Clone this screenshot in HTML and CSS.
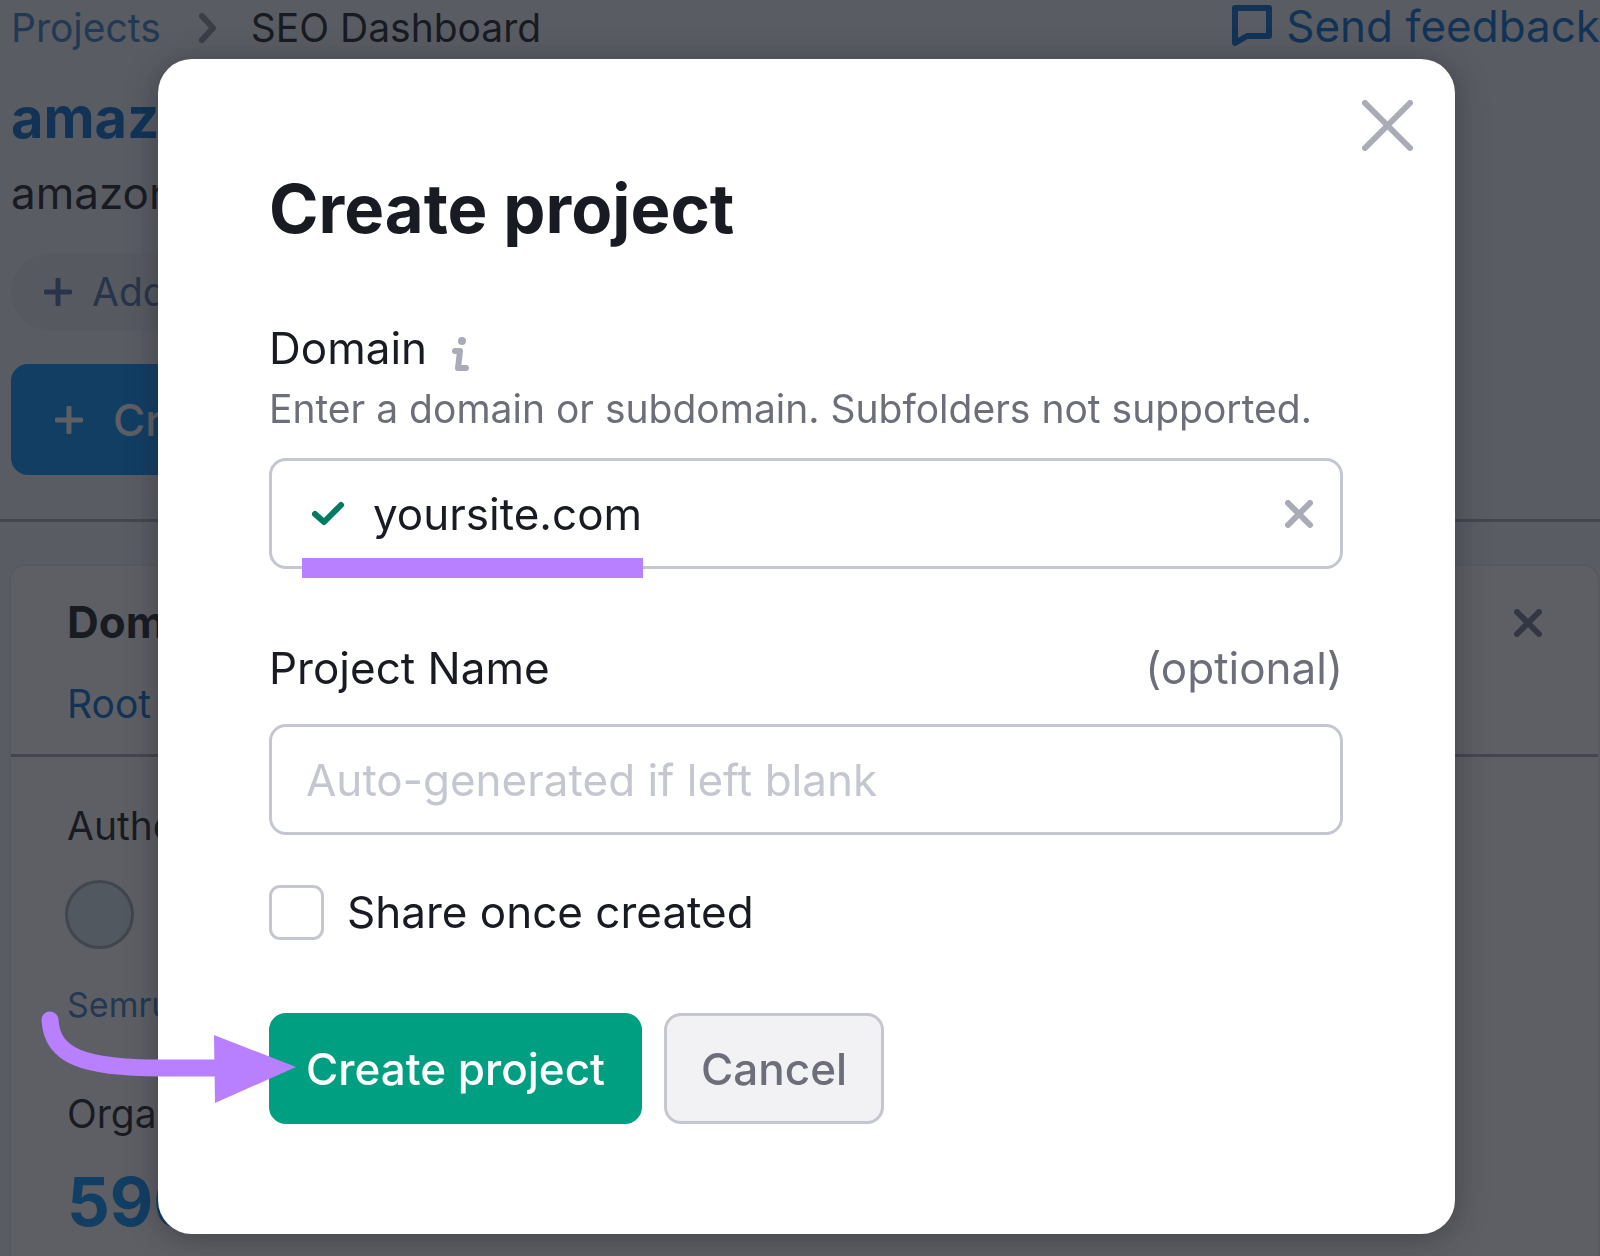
FILE: index.html
```html
<!DOCTYPE html>
<html lang="en">
<head>
  <meta charset="UTF-8">
  <meta name="viewport" content="width=device-width, initial-scale=1.0">
  <title>SEO Dashboard</title>
  <link rel="stylesheet" href="styles.css">
</head>
<body>
  <div class="page">
    <header class="topbar">
      <nav class="breadcrumb">
        <a href="#">Projects</a>
        <svg class="chevron" width="18" height="30" viewBox="0 0 18 30"><path d="M3 3l11 12L3 27"/></svg>
        <span>SEO Dashboard</span>
      </nav>
      <a class="feedback" href="#">
        <svg width="40" height="42" viewBox="0 0 40 42"><path d="M3 3h34v28H15L3 38z"/></svg>
        Send feedback
      </a>
    </header>

    <section class="summary">
      <a class="project" href="#">amazon</a>
      <p class="domain">amazon.com</p>
      <button class="tag">
        <svg width="28" height="28" viewBox="0 0 28 28"><path d="M14 2v24M2 14h24"/></svg>
        Add tags
      </button>
      <button class="new-project">
        <svg width="28" height="28" viewBox="0 0 28 28"><path d="M14 2v24M2 14h24"/></svg>
        Create
      </button>
    </section>

    <section class="card">
      <div class="card-head">
        <div>
          <h2>Domain</h2>
          <a href="#">Root</a>
        </div>
        <button class="card-close" aria-label="Remove">
          <svg width="28" height="28" viewBox="0 0 28 28"><path d="M3 3l22 22M25 3L3 25"/></svg>
        </button>
      </div>
      <div class="card-body">
        <p class="metric">Authority</p>
        <div class="score"></div>
        <a class="rank" href="#">Semrush</a>
        <p class="metric">Organic</p>
        <strong class="value">590M</strong>
      </div>
    </section>
  </div>

  <div class="overlay">
    <form class="modal" role="dialog" aria-labelledby="modal_title">
      <button type="button" class="close" aria-label="Close">
        <svg width="51" height="51" viewBox="0 0 51 51"><path d="M3 3l45 45M48 3L3 48"/></svg>
      </button>
      <h1 id="modal_title">Create project</h1>

      <div class="label-row">
        <label for="domain">Domain</label>
        <svg class="info" width="18" height="36" viewBox="0 0 18 36"><circle cx="10" cy="5" r="4"/><path d="M3 15h5L6 32h8"/></svg>
      </div>
      <p class="hint">Enter a domain or subdomain. Subfolders not supported.</p>
      <div class="field">
        <svg class="check" width="32" height="25" viewBox="0 0 32 25"><path d="M3 13l9 8L29 4"/></svg>
        <input type="text" id="domain" value="yoursite.com">
        <button type="button" class="clear" aria-label="Clear">
          <svg width="28" height="28" viewBox="0 0 28 28"><path d="M3 3l22 22M25 3L3 25"/></svg>
        </button>
        <span class="underline"></span>
      </div>

      <div class="label-row name-row">
        <label for="name">Project Name</label>
        <span class="optional">(optional)</span>
      </div>
      <div class="field">
        <input type="text" id="name" placeholder="Auto-generated if left blank">
      </div>

      <div class="share">
        <input type="checkbox" id="share">
        <label for="share">Share once created</label>
      </div>

      <div class="actions">
        <button type="submit" class="btn btn-primary">Create project</button>
        <button type="button" class="btn btn-cancel">Cancel</button>
      </div>

      <svg class="arrow" width="256" height="96" viewBox="0 0 256 96">
        <path class="tail" d="M9 11C11 47 42 59 120 59H176"/>
        <path class="head" d="M173 26L255 58L174 94z"/>
      </svg>
    </form>
  </div>
</body>
</html>
```

FILE: styles.css
```css
* {
  box-sizing: border-box;
}
body {
  margin: 0;
  font-family: Inter, "Liberation Sans", sans-serif;
  font-size: 44px;
  line-height: 56px;
  color: #191b23;
  background: #f0f4f9;
}
h1, h2, p {
  margin: 0;
}
a {
  color: #006dca;
  text-decoration: none;
}
button, input {
  font: inherit;
  color: inherit;
}
button {
  border: none;
  padding: 0;
  background: none;
  cursor: pointer;
}
svg {
  display: block;
  flex: none;
  fill: none;
  stroke: currentColor;
  stroke-width: 6;
  stroke-linecap: round;
  stroke-linejoin: round;
}

/* dashboard behind the dialog */
.page {
  height: 100vh;
  overflow: hidden;
}
.topbar {
  display: flex;
  justify-content: space-between;
  height: 56px;
  padding-left: 11px;
}
.breadcrumb {
  display: flex;
  align-items: center;
  font-size: 39px;
}
.breadcrumb a {
  color: #3a7fc4;
}
.chevron {
  margin: 0 34px 0 38px;
  color: #8a8e9b;
}
.feedback {
  display: flex;
  align-items: center;
  gap: 14px;
  height: 52px;
}
.summary {
  display: flex;
  flex-direction: column;
  align-items: flex-start;
  padding: 28px 11px 44px;
  border-bottom: 3px solid #a9abb6;
}
.project {
  font-size: 56px;
  font-weight: 700;
  line-height: 68px;
}
.domain {
  margin: 13px 0 32px;
}
.tag, .new-project {
  display: flex;
  align-items: center;
}
.tag {
  gap: 20px;
  height: 78px;
  padding: 0 33px;
  border-radius: 39px;
  background: #e8ebf0;
  color: #4a6fa5;
  font-size: 39px;
}
.tag svg, .new-project svg {
  stroke-width: 5;
}
.new-project {
  gap: 30px;
  height: 111px;
  margin-top: 33px;
  padding: 0 44px;
  border-radius: 17px;
  background: #008ff8;
  color: #fff;
  font-weight: 500;
}
.card {
  margin: 42px 0 0 9px;
  border: 2px solid #e8eaef;
  border-radius: 17px;
  background: #fff;
}
.card-head {
  display: flex;
  justify-content: space-between;
  align-items: flex-start;
  padding: 28px 56px 22px;
  border-bottom: 3px solid #a9abb6;
}
.card-head h2 {
  margin-bottom: 26px;
  font-size: 44px;
}
.card-head a {
  display: block;
  font-size: 39px;
}
.card-close {
  margin-top: 15px;
  color: #6c7a8c;
}
.card-body {
  padding: 41px 56px;
}
.metric {
  font-size: 39px;
}
.score {
  width: 69px;
  height: 69px;
  margin: 26px 0 36px -2px;
  border: 3px solid #9aa8b2;
  border-radius: 50%;
  background: #d3e6ea;
}
.rank {
  display: block;
  margin-bottom: 61px;
  font-size: 34px;
  line-height: 40px;
  color: #3a7fc4;
}
.value {
  display: block;
  margin-top: 20px;
  font-size: 67px;
  line-height: 80px;
  color: #008ff8;
}

/* dialog */
.overlay {
  position: fixed;
  inset: 0;
  padding: 59px 145px 21px 158px;
  background: rgba(25, 27, 35, 0.7);
}
.modal {
  position: relative;
  padding: 110px 112px 110px 111px;
  border-radius: 34px;
  background: #fff;
  box-shadow: 0 4px 32px rgba(25, 27, 35, 0.4);
}
.close {
  position: absolute;
  top: 41px;
  right: 42px;
  color: #a9abb6;
}
h1 {
  font-size: 67px;
  line-height: 80px;
}
.label-row {
  display: flex;
  margin-top: 71px;
}
.info {
  margin: 16px 0 0 25px;
  color: #a9abb6;
}
.info circle {
  fill: currentColor;
  stroke: none;
}
.hint {
  margin: 5px 0 21px;
  font-size: 39px;
  color: #6c6e79;
}
.field {
  position: relative;
  display: flex;
  align-items: center;
  height: 111px;
  padding: 0 27px 0 34px;
  border: 3px solid #c4c7cf;
  border-radius: 17px;
}
.field input {
  flex: 1;
  min-width: 0;
  height: 100%;
  padding: 0;
  border: none;
  outline: none;
  background: none;
}
.field input::placeholder {
  color: #c4c7cf;
}
.check {
  margin: 0 29px 0 6px;
  color: #007c65;
}
.clear {
  color: #a9abb6;
}
.underline {
  position: absolute;
  left: 30px;
  bottom: -12px;
  width: 341px;
  height: 20px;
  background: #b880ff;
}
.name-row {
  justify-content: space-between;
  margin-bottom: 28px;
}
.optional {
  color: #6c6e79;
}
.share {
  display: flex;
  align-items: center;
  gap: 23px;
  margin: 49px 0 73px;
}
.share input {
  appearance: none;
  width: 55px;
  height: 55px;
  margin: 0;
  border: 3px solid #c4c7cf;
  border-radius: 11px;
  background: #fff;
}
.actions {
  display: flex;
  gap: 22px;
}
.btn {
  height: 111px;
  padding: 0 34px;
  border: 3px solid #c4c7cf;
  border-radius: 17px;
  font-weight: 500;
}
.btn-primary {
  border-color: #009f81;
  background: #009f81;
  color: #fff;
}
.btn-cancel {
  background: #f2f2f5;
  color: #6c6e79;
}
.arrow {
  position: absolute;
  left: -117px;
  bottom: 129px;
}
.tail {
  stroke: #b880ff;
  stroke-width: 17;
}
.head {
  fill: #b880ff;
  stroke: none;
}
```
